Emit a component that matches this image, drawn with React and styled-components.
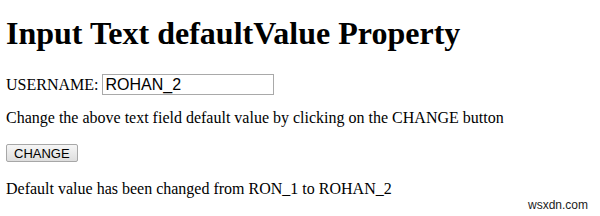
import React from 'react';
import styled, { createGlobalStyle } from 'styled-components';

const GlobalStyle = createGlobalStyle`
  html, body {
    margin: 0;
    background: #fff;
  }
  body {
    font-family: 'Liberation Serif', 'Times New Roman', serif;
    font-size: 16px;
    color: #000;
  }
`;

const Page = styled.div`
  position: relative;
  width: 600px;
  height: 216px;
  padding: 0 6px;
  box-sizing: border-box;
  overflow: hidden;
`;

const Title = styled.h1`
  margin: 0;
  padding-top: 15px;
  font-size: 32px;
  font-weight: bold;
  line-height: 37px;
`;

const Row = styled.p`
  margin: ${(p) => p.$top}px 0 0;
  line-height: 18px;
  display: flex;
  align-items: center;
`;

const TextField = styled.input`
  width: 172px;
  height: 21px;
  box-sizing: border-box;
  margin-left: 4px;
  padding: 0 2px;
  border: 1px solid #a9a9a9;
  font-family: 'Liberation Sans', Arial, sans-serif;
  font-size: 16px;
  color: #000;
  outline: none;
`;

const Button = styled.button`
  height: 18px;
  padding: 0 7px;
  border: 1px solid #a7a7a7;
  border-radius: 2px;
  background: linear-gradient(#f6f6f6, #dedede);
  font-family: 'Liberation Sans', Arial, sans-serif;
  font-size: 13px;
  color: #000;
`;

const Watermark = styled.span`
  position: absolute;
  right: 12px;
  bottom: 4px;
  font-family: 'Liberation Sans', Arial, sans-serif;
  font-size: 12px;
  color: #222;
`;

export default function App() {
  return (
    <>
      <GlobalStyle />
      <Page>
        <Title>Input Text defaultValue Property</Title>
        <Row $top={22}>
          USERNAME:
          <TextField type="text" defaultValue="ROHAN_2" />
        </Row>
        <Row $top={14}>
          Change the above text field default value by clicking on the CHANGE button
        </Row>
        <Row $top={17}>
          <Button type="button">CHANGE</Button>
        </Row>
        <Row $top={18}>Default value has been changed from RON_1 to ROHAN_2</Row>
        <Watermark>wsxdn.com</Watermark>
      </Page>
    </>
  );
}
